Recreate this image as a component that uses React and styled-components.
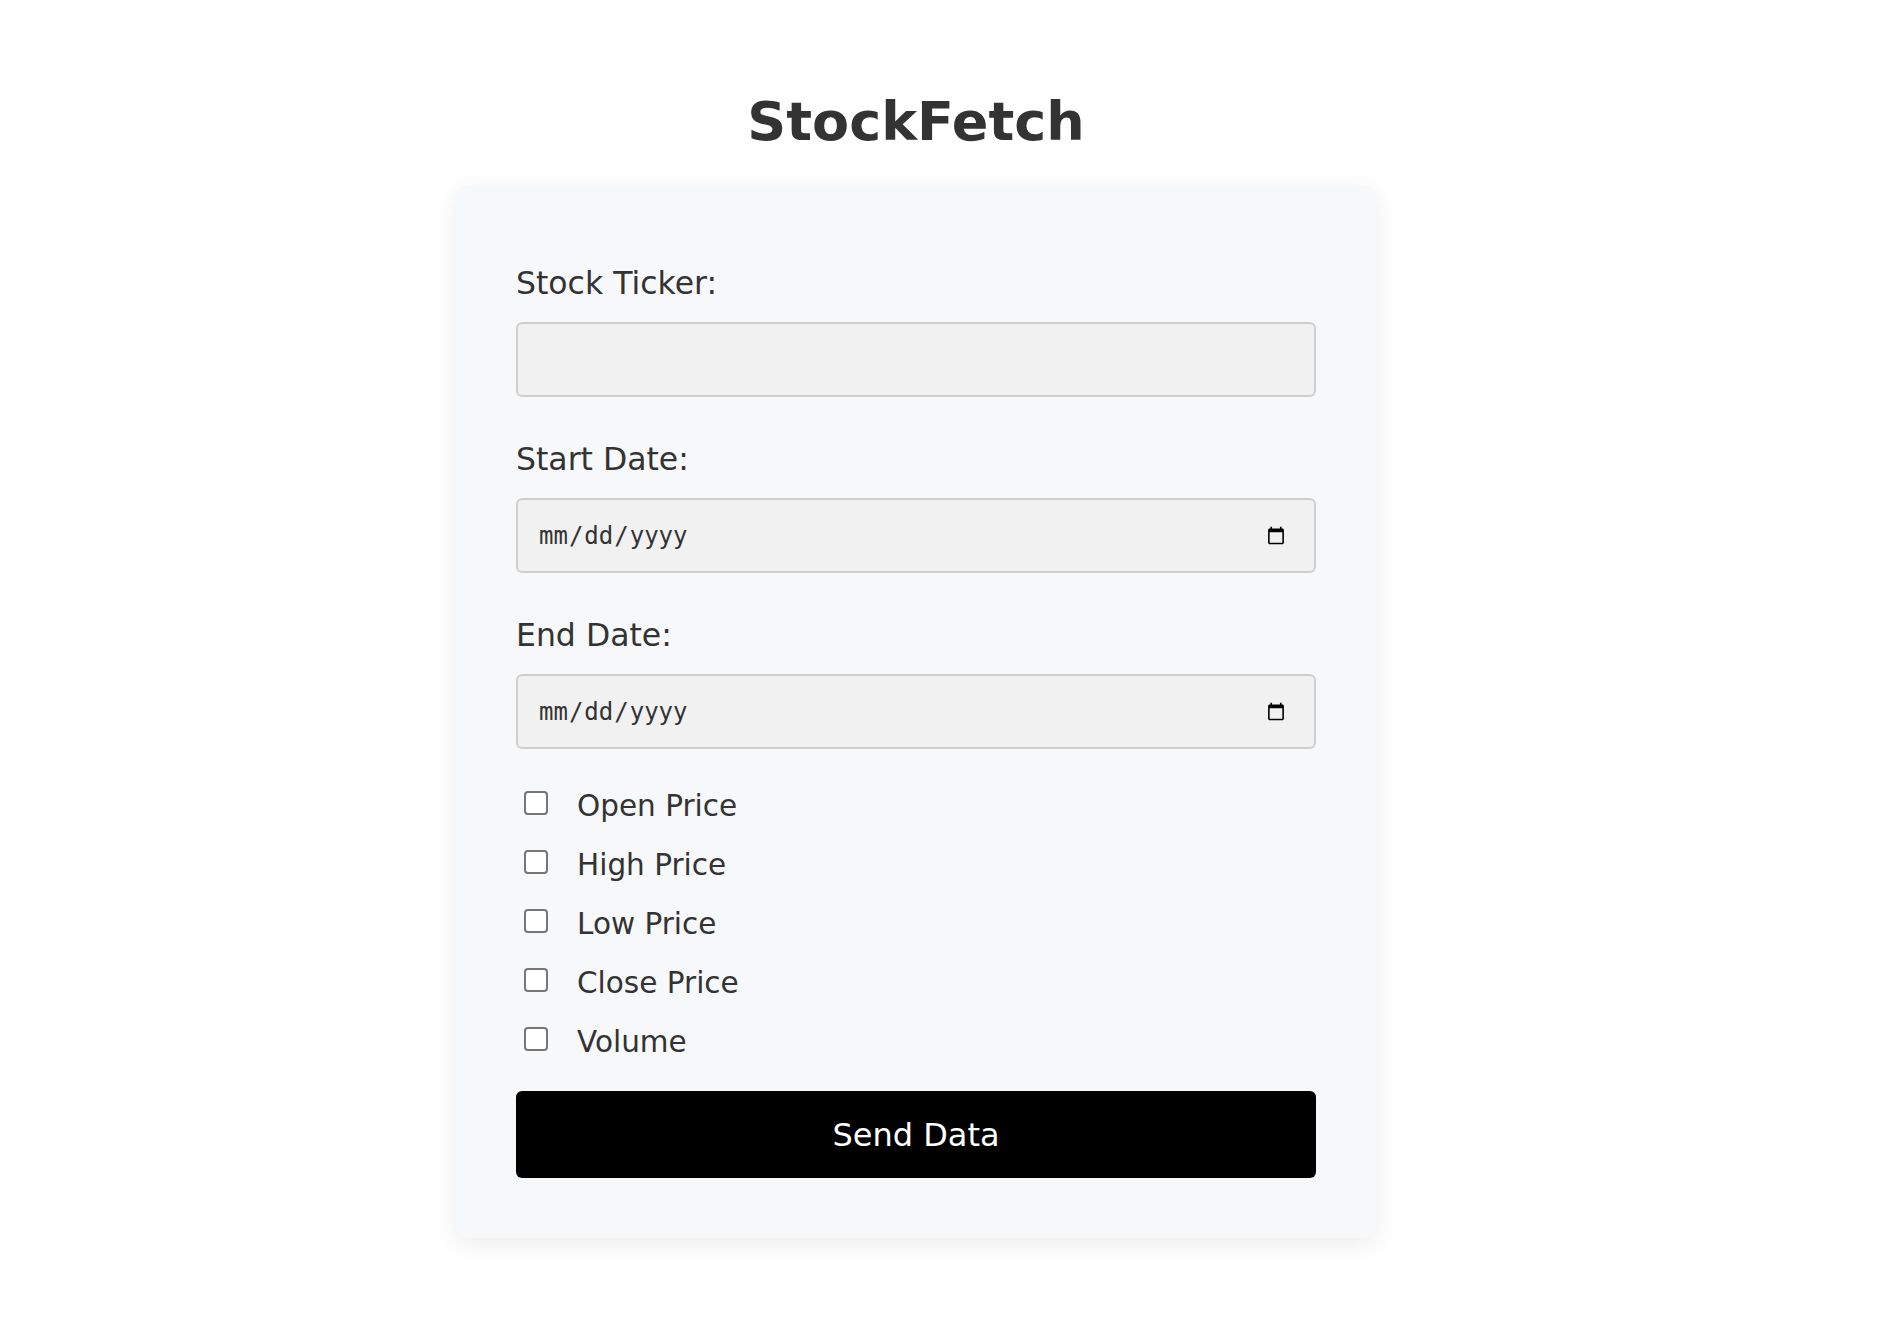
import React from "react";
import styled, { createGlobalStyle } from "styled-components";

const GlobalStyle = createGlobalStyle`
  body {
    margin: 0;
    background: #ffffff;
    font-family: "DejaVu Sans", "Liberation Sans", sans-serif;
    color: #333333;
  }
  * {
    box-sizing: border-box;
  }
`;

const Page = styled.div`
  display: flex;
  flex-direction: column;
  align-items: center;
  padding: 90px 61px 100px 0;
`;

const Title = styled.h1`
  margin: 0 0 31px;
  font-size: 54px;
  line-height: 64px;
  font-weight: 700;
  color: #333333;
`;

const Card = styled.div`
  width: 920px;
  padding: 80px 60px 60px;
  background: #f7f8fa;
  border-radius: 12px;
  box-shadow: 0 6px 24px rgba(0, 0, 0, 0.08);
`;

const Form = styled.form`
  display: flex;
  flex-direction: column;
`;

const Field = styled.div`
  display: flex;
  flex-direction: column;
  gap: 21px;

  & + & {
    margin-top: 44px;
  }
`;

const Label = styled.label`
  font-size: 31.5px;
  line-height: 36px;
  color: #333333;
`;

const Input = styled.input`
  height: 75px;
  width: 100%;
  padding: 0 20px;
  background: #f1f1f1;
  border: 2px solid #cfcfcf;
  border-radius: 6px;
  color: #333333;
  font-family: ${({ type }) =>
    type === "date" ? '"DejaVu Sans Mono", monospace' : '"DejaVu Sans", sans-serif'};
  font-size: 24px;
  outline: none;

  &::-webkit-calendar-picker-indicator {
    width: 20px;
    height: 20px;
    margin-right: 6px;
  }
`;

const CheckList = styled.div`
  display: flex;
  flex-direction: column;
  margin-top: 27px;
`;

const CheckRow = styled.label`
  display: flex;
  align-items: center;
  height: 59px;
  font-size: 29.5px;
  color: #333333;
  cursor: pointer;
`;

const Checkbox = styled.input`
  appearance: none;
  width: 24px;
  height: 24px;
  margin: 0 29px 6px 8px;
  flex-shrink: 0;
  background: #ffffff;
  border: 2px solid #767676;
  border-radius: 4px;
  cursor: pointer;

  &:checked {
    background: #0075ff;
    border-color: #0075ff;
  }
`;

const SubmitButton = styled.button`
  margin-top: 20px;
  height: 87px;
  width: 100%;
  background: #000000;
  color: #ffffff;
  border: none;
  border-radius: 6px;
  font-family: "DejaVu Sans", sans-serif;
  font-size: 32px;
  cursor: pointer;
`;

const fields = ["Open Price", "High Price", "Low Price", "Close Price", "Volume"];

export default function App() {
  return (
    <>
      <GlobalStyle />
      <Page>
        <Title>StockFetch</Title>
        <Card>
          <Form onSubmit={(e) => e.preventDefault()}>
            <Field>
              <Label htmlFor="ticker">Stock Ticker:</Label>
              <Input id="ticker" type="text" />
            </Field>
            <Field>
              <Label htmlFor="start">Start Date:</Label>
              <Input id="start" type="date" />
            </Field>
            <Field>
              <Label htmlFor="end">End Date:</Label>
              <Input id="end" type="date" />
            </Field>
            <CheckList>
              {fields.map((name) => (
                <CheckRow key={name}>
                  <Checkbox type="checkbox" />
                  {name}
                </CheckRow>
              ))}
            </CheckList>
            <SubmitButton type="submit">Send Data</SubmitButton>
          </Form>
        </Card>
      </Page>
    </>
  );
}
